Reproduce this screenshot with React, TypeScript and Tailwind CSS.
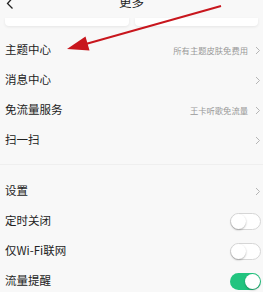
import React from 'react';

const font = { fontFamily: '"Noto Sans CJK SC", "Noto Sans", sans-serif' };

const Chevron = () => (
  <svg width="6" height="9" viewBox="0 0 6 9" className="shrink-0">
    <path d="M1 1l3.5 3.5L1 8" fill="none" stroke="#b5b5b5" strokeWidth="1" />
  </svg>
);

const Toggle = ({ on }: { on?: boolean }) => (
  <div
    className={`relative w-[31px] h-[17px] rounded-full ${
      on ? 'bg-[#22c47f]' : 'bg-white border border-[#d6d6d6]'
    }`}
  >
    <div
      className={`absolute w-[15px] h-[15px] rounded-full bg-white shadow-[0_1px_2px_rgba(0,0,0,0.3)] ${
        on ? 'top-[1px] right-[1px]' : 'top-0 left-0'
      }`}
    />
  </div>
);

const Row = ({ label, note, toggle }: { label: string; note?: string; toggle?: 'on' | 'off' }) => (
  <div className="h-[30px] flex items-center justify-between pl-[5px] pr-[2px]">
    <span className="text-[11.5px] text-[#222]">{label}</span>
    <div className="flex items-center gap-[7px]">
      {note && <span className="text-[8.3px] text-[#999]">{note}</span>}
      {toggle ? <Toggle on={toggle === 'on'} /> : <Chevron />}
    </div>
  </div>
);

export default function App() {
  return (
    <div className="relative w-[263px] h-[292px] overflow-hidden bg-[#f8f8f8]" style={font}>
      {/* Header */}
      <div className="relative h-[12px] -mt-[4px] flex items-center justify-center">
        <svg width="8" height="12" viewBox="0 0 8 12" className="absolute left-[6px] top-[1px]">
          <path d="M6.5 1L1.5 6.5l5 5" fill="none" stroke="#222" strokeWidth="1.3" />
        </svg>
        <span className="text-[12.5px] text-[#222] leading-none">更多</span>
      </div>

      {/* Cards */}
      <div className="flex gap-[6px] px-[5px] mt-[10px]">
        <div className="flex-1 h-[8px] bg-white rounded-b-[4px] shadow-[0_1px_3px_rgba(0,0,0,0.08)]" />
        <div className="flex-1 h-[8px] bg-white rounded-b-[4px] shadow-[0_1px_3px_rgba(0,0,0,0.08)]" />
      </div>

      <div className="mt-[9px]">
        <Row label="主题中心" note="所有主题皮肤免费用" />
        <Row label="消息中心" />
        <Row label="免流量服务" note="王卡听歌免流量" />
        <Row label="扫一扫" />
      </div>

      <div className="mt-[9px] h-px bg-[#efefef]" />

      <div className="mt-[11px]">
        <Row label="设置" />
        <Row label="定时关闭" toggle="off" />
        <Row label="仅Wi-Fi联网" toggle="off" />
        <Row label="流量提醒" toggle="on" />
      </div>

      {/* Annotation arrow */}
      <svg className="absolute inset-0 pointer-events-none" width="263" height="292">
        <line x1="221" y1="6" x2="84" y2="44.5" stroke="#c8161d" strokeWidth="2" />
        <polygon points="67,49 85.5,36.5 89.5,50.5" fill="#c8161d" />
      </svg>
    </div>
  );
}
